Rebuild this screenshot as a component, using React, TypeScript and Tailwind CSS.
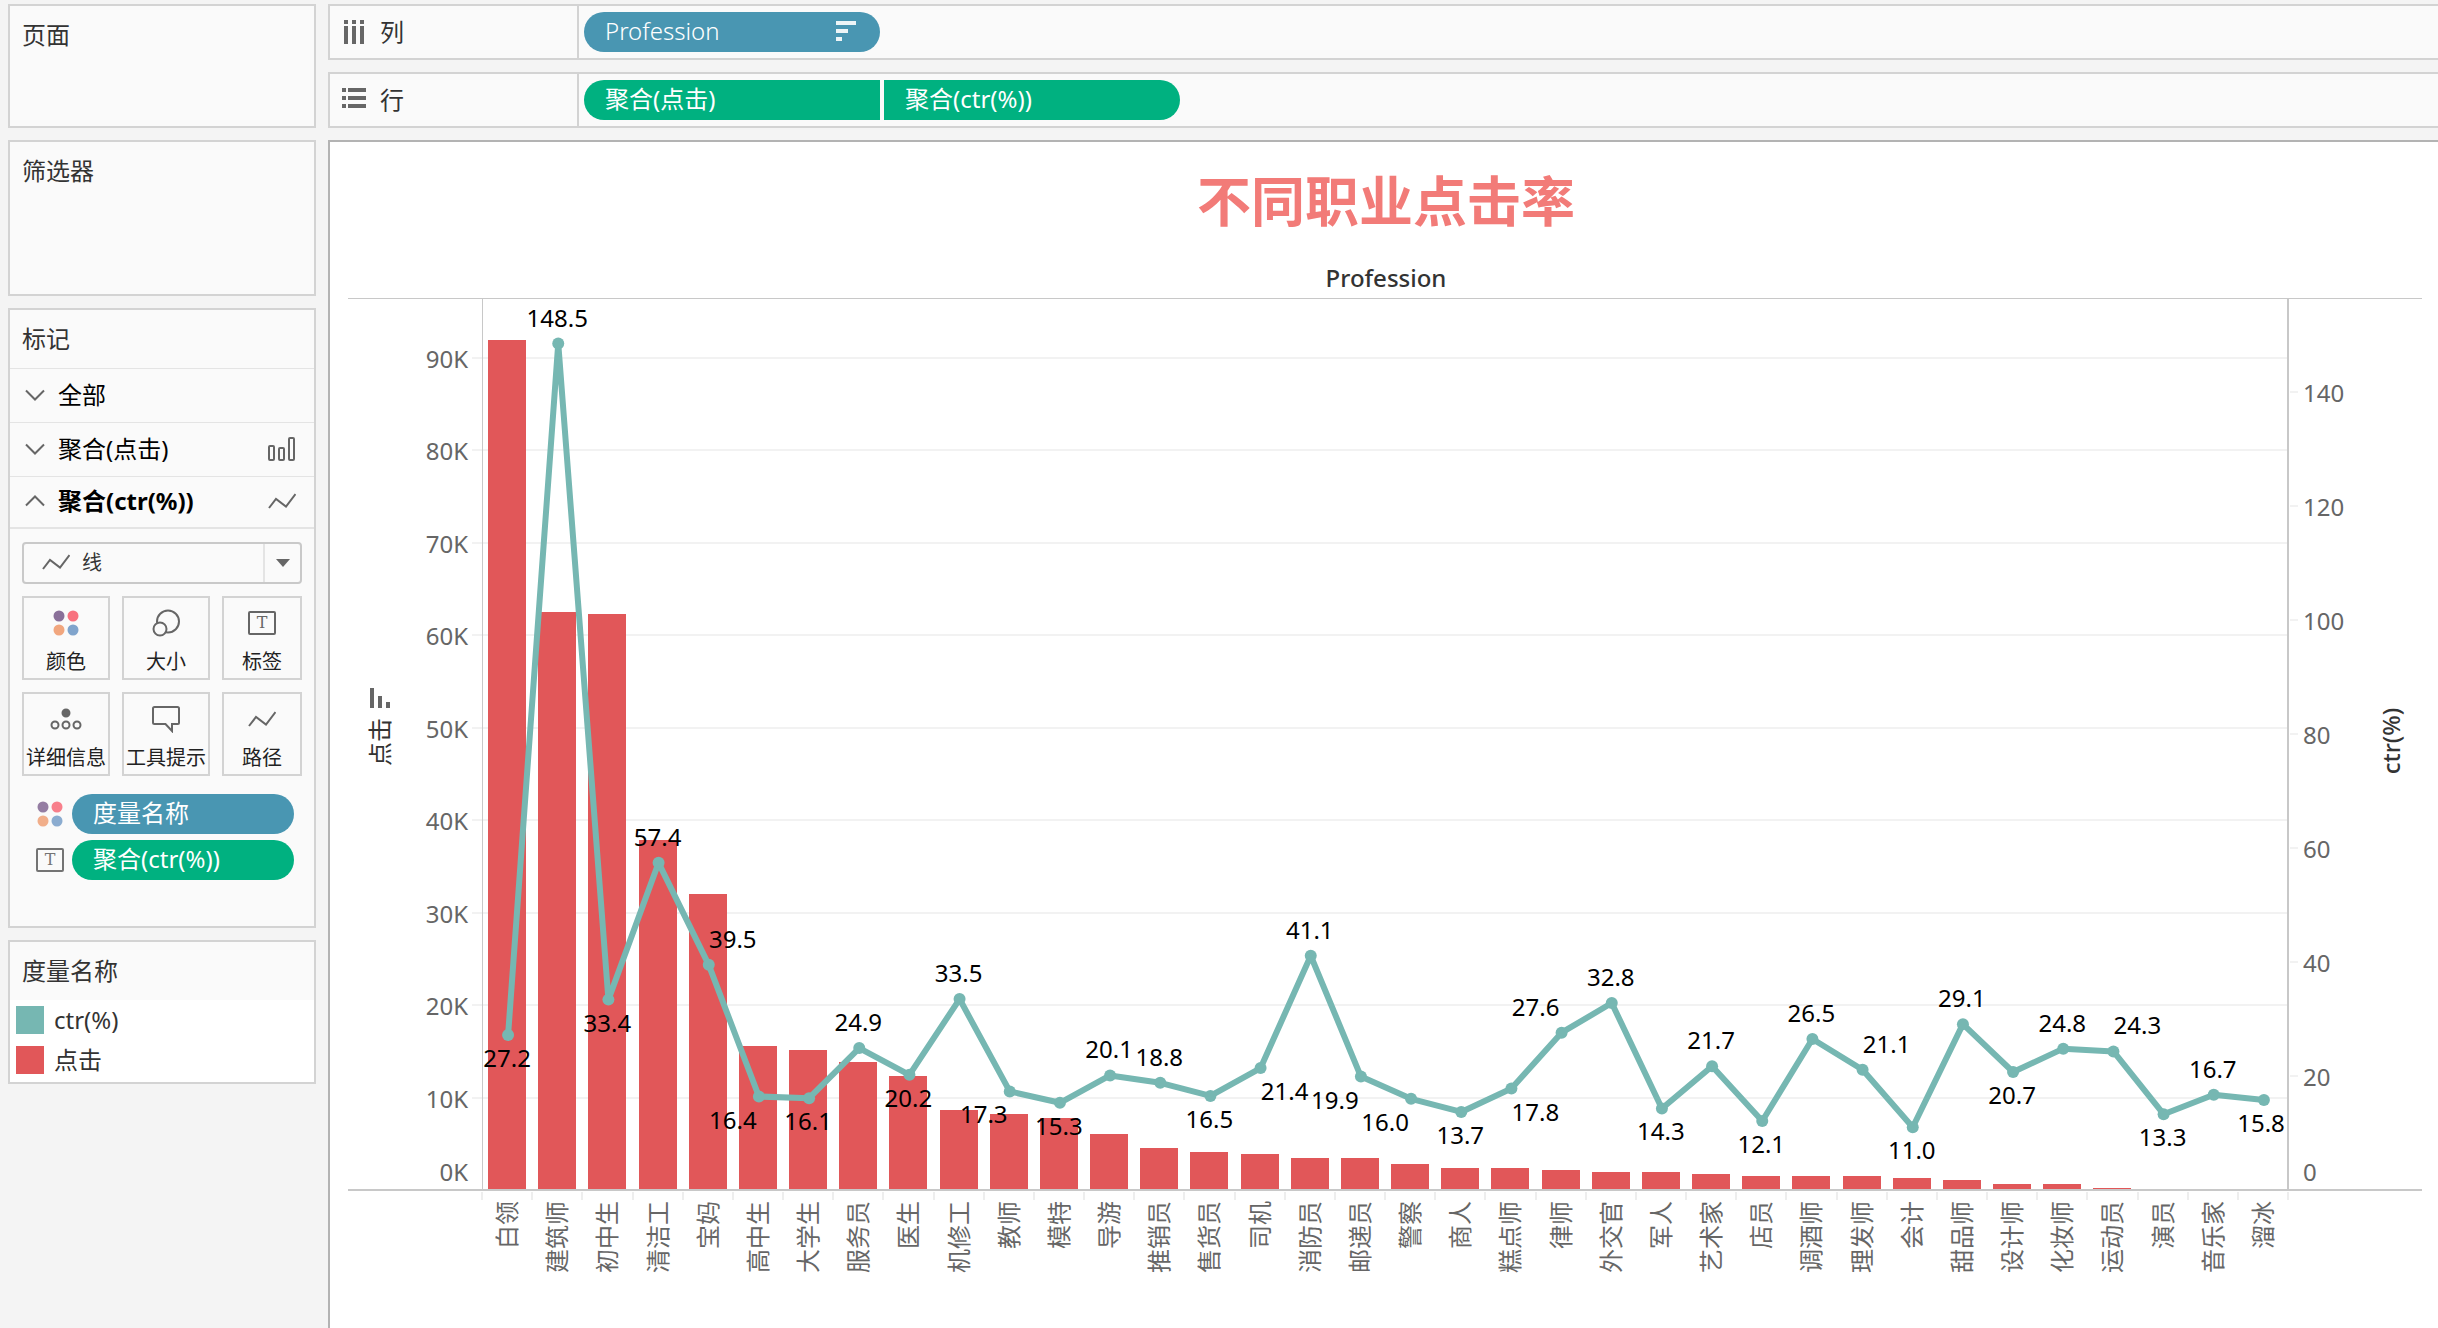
import { useState, type ReactNode } from 'react'

type LabelPlace = 'top' | 'bottom' | 'top-left' | 'top-right' | 'bottom-left' | 'bottom-right'

interface Item {
  name: string
  clicks: number // thousands
  ctr: number
  label: LabelPlace
}

const items: Item[] = [
  { name: '白领', clicks: 91.95, ctr: 27.2, label: 'bottom' },
  { name: '建筑师', clicks: 62.5, ctr: 148.5, label: 'top' },
  { name: '初中生', clicks: 62.3, ctr: 33.4, label: 'bottom' },
  { name: '清洁工', clicks: 37.86, ctr: 57.4, label: 'top' },
  { name: '宝妈', clicks: 32, ctr: 39.5, label: 'top-right' },
  { name: '高中生', clicks: 15.6, ctr: 16.4, label: 'bottom-left' },
  { name: '大学生', clicks: 15.15, ctr: 16.1, label: 'bottom' },
  { name: '服务员', clicks: 13.85, ctr: 24.9, label: 'top' },
  { name: '医生', clicks: 12.3, ctr: 20.2, label: 'bottom' },
  { name: '机修工', clicks: 8.65, ctr: 33.5, label: 'top' },
  { name: '教师', clicks: 8.2, ctr: 17.3, label: 'bottom-left' },
  { name: '模特', clicks: 7.8, ctr: 15.3, label: 'bottom' },
  { name: '导游', clicks: 6.06, ctr: 20.1, label: 'top' },
  { name: '推销员', clicks: 4.54, ctr: 18.8, label: 'top' },
  { name: '售货员', clicks: 4.1, ctr: 16.5, label: 'bottom' },
  { name: '司机', clicks: 3.9, ctr: 21.4, label: 'bottom-right' },
  { name: '消防员', clicks: 3.46, ctr: 41.1, label: 'top' },
  { name: '邮递员', clicks: 3.46, ctr: 19.9, label: 'bottom-left' },
  { name: '警察', clicks: 2.8, ctr: 16.0, label: 'bottom-left' },
  { name: '商人', clicks: 2.38, ctr: 13.7, label: 'bottom' },
  { name: '糕点师', clicks: 2.38, ctr: 17.8, label: 'bottom-right' },
  { name: '律师', clicks: 2.16, ctr: 27.6, label: 'top-left' },
  { name: '外交官', clicks: 1.95, ctr: 32.8, label: 'top' },
  { name: '军人', clicks: 1.95, ctr: 14.3, label: 'bottom' },
  { name: '艺术家', clicks: 1.73, ctr: 21.7, label: 'top' },
  { name: '店员', clicks: 1.5, ctr: 12.1, label: 'bottom' },
  { name: '调酒师', clicks: 1.5, ctr: 26.5, label: 'top' },
  { name: '理发师', clicks: 1.5, ctr: 21.1, label: 'top-right' },
  { name: '会计', clicks: 1.3, ctr: 11.0, label: 'bottom' },
  { name: '甜品师', clicks: 1.08, ctr: 29.1, label: 'top' },
  { name: '设计师', clicks: 0.65, ctr: 20.7, label: 'bottom' },
  { name: '化妆师', clicks: 0.65, ctr: 24.8, label: 'top' },
  { name: '运动员', clicks: 0.2, ctr: 24.3, label: 'top-right' },
  { name: '演员', clicks: 0, ctr: 13.3, label: 'bottom' },
  { name: '音乐家', clicks: 0, ctr: 16.7, label: 'top' },
  { name: '溜冰', clicks: 0, ctr: 15.8, label: 'bottom' },
]

function LineIcon() {
  return (
    <svg viewBox="0 0 28 16" className="h-4 w-7 fill-none stroke-[#666] stroke-2">
      <path d="M1 15 L8 6 L18 13.5 L27.500 1" />
    </svg>
  )
}

function BarsIcon() {
  return (
    <svg viewBox="0 0 28 24" className="h-6 w-7 fill-none stroke-[#666] stroke-2">
      <rect x="1" y="9" width="5" height="14" rx="1" />
      <rect x="11" y="11" width="5" height="12" rx="1" />
      <rect x="21" y="1" width="5" height="22" rx="1" />
    </svg>
  )
}

function Chevron({ up = false }: { up?: boolean }) {
  return (
    <svg viewBox="0 0 20 12" className="h-3 w-5 fill-none stroke-[#666] stroke-2">
      <path d={up ? 'M1 10.500 L10 1.500 L19 10.500' : 'M1 1.500 L10 10.500 L19 1.500'} />
    </svg>
  )
}

function ColorIcon() {
  return (
    <svg viewBox="0 0 26 26" className="size-[26px]">
      <circle cx="6" cy="6" r="5.500" fill="#8a7099" />
      <circle cx="20" cy="6" r="5.500" fill="#f8727f" />
      <circle cx="6" cy="20" r="5.500" fill="#f1a67e" />
      <circle cx="20" cy="20" r="5.500" fill="#80a4cc" />
    </svg>
  )
}

function SizeIcon() {
  return (
    <svg viewBox="0 0 28 28" className="size-7 fill-[#fafafa] stroke-[#666] stroke-2">
      <circle cx="16" cy="12.500" r="11" />
      <circle cx="8" cy="20" r="6.500" />
    </svg>
  )
}

function DetailIcon() {
  return (
    <svg viewBox="0 0 32 22" className="h-[22px] w-8 fill-none stroke-[#666] stroke-2">
      <circle cx="16" cy="5" r="3.500" className="fill-[#666]" />
      <circle cx="5" cy="17" r="3.500" />
      <circle cx="16" cy="17" r="3.500" />
      <circle cx="27" cy="17" r="3.500" />
    </svg>
  )
}

function TooltipIcon() {
  return (
    <svg viewBox="0 0 28 28" className="size-7 fill-none stroke-[#666] stroke-2">
      <path d="M2.500 2 H25.500 Q27 2 27 3.500 V18 Q27 19 26 19 H20 V26 L13.500 19 H2.500 Q1 19 1 17.500 V3.500 Q1 2 2.500 2 Z" />
    </svg>
  )
}

function TextIcon() {
  return (
    <span className="flex h-6 w-7 items-center justify-center rounded-xs border-2 border-[#666] font-['DejaVu_Serif',serif] text-base leading-none text-[#666]">
      T
    </span>
  )
}

function ColumnsIcon() {
  return (
    <svg viewBox="0 0 24 24" className="size-6 fill-[#666]">
      <path d="M2 0h4v4H2zM10 0h4v4h-4zM18 0h4v4h-4zM2 6h4v18H2zM10 6h4v18h-4zM18 6h4v18h-4z" />
    </svg>
  )
}

function RowsIcon() {
  return (
    <svg viewBox="0 0 24 24" className="size-6 fill-[#666]">
      <path d="M0 0h4v4H0zM6 0h18v4H6zM0 8h4v4H0zM6 8h18v4H6zM0 16h4v4H0zM6 16h18v4H6z" />
    </svg>
  )
}

function SortIcon() {
  return (
    <svg viewBox="0 0 20 20" className="size-5 fill-white/90">
      <path d="M0 0h20v4H0zM0 8h12v4H0zM0 16h6v4H0z" />
    </svg>
  )
}

function Panel({ title, className = '', children }: { title: string; className?: string; children?: ReactNode }) {
  return (
    <section className={`border-2 border-[#d3d3d3] bg-[#fafafa] ${className}`}>
      <h2 className="flex h-[58px] items-center px-3">{title}</h2>
      {children}
    </section>
  )
}

function Shelf({ icon, title, children }: { icon: ReactNode; title: string; children: ReactNode }) {
  return (
    <div className="flex h-14 border-2 border-r-0 border-[#d3d3d3] bg-[#fafafa]">
      <div className="flex w-[249px] items-center gap-3.5 border-r-2 border-[#d3d3d3] px-3">
        {icon}
        {title}
      </div>
      <div className="flex items-center gap-1 px-[5px]">{children}</div>
    </div>
  )
}

function Chart() {
  const left = 152
  const right = 1958
  const base = 892
  const step = (right - left) / items.length
  const x = (i: number) => left + step * (i + 0.5) + 1
  const yClicks = (v: number) => base - v * 9.244
  const yCtr = (v: number) => base - v * 5.7

  return (
    <svg viewBox="0 0 2108 1026" className="block w-full text-[24px]" role="img" aria-label="不同职业点击率">
      {/* grid */}
      {[10, 20, 30, 40, 50, 60, 70, 80, 90].map((v) => (
        <rect key={v} x={142} y={Math.round(yClicks(v)) - 1} width={right - 142} height={2} className="fill-[#f2f2f2]" />
      ))}
      {[20, 40, 60, 80, 100, 120, 140].map((v) => (
        <rect key={v} x={1960} y={yCtr(v) - 1} width={8} height={2} className="fill-[#f2f2f2]" />
      ))}
      {Array.from({ length: items.length + 1 }, (_, i) => (
        <rect key={i} x={Math.round(left + step * i) - 1} y={894} width={2} height={8} className="fill-[#eeeeee]" />
      ))}
      <rect x={18} y={0} width={2074} height={1} className="fill-[#c8c8c8]" />
      <rect x={left} y={0} width={1} height={base} className="fill-[#c8c8c8]" />

      {/* bars */}
      {items.map((d, i) => (
        <rect
          key={d.name}
          x={Math.round(x(i) - 20)}
          y={Math.round(yClicks(d.clicks))}
          width={38}
          height={Math.round(d.clicks * 9.244)}
          className="fill-[#e15759]"
        />
      ))}
      <rect x={18} y={base - 1} width={2074} height={2} className="fill-[#c8c8c8]" />
      <rect x={right - 1} y={0} width={2} height={base} className="fill-[#c8c8c8]" />

      {/* line */}
      <polyline
        points={items.map((d, i) => `${x(i)},${yCtr(d.ctr)}`).join(' ')}
        className="fill-none stroke-[#76b7b2] stroke-[6px]"
        strokeLinejoin="round"
      />
      {items.map((d, i) => (
        <circle key={d.name} cx={x(i)} cy={yCtr(d.ctr)} r={6} className="fill-[#76b7b2]" />
      ))}
      {items.map((d, i) => {
        const dx = d.label.endsWith('left') ? -26 : d.label.endsWith('right') ? 24 : -1
        const dy = d.label.startsWith('top') ? -17 : 32
        return (
          <text key={d.name} x={Math.min(x(i) + dx, right - 27)} y={yCtr(d.ctr) + dy} textAnchor="middle" className="fill-black">
            {d.ctr.toFixed(1)}
          </text>
        )
      })}

      {/* axis labels */}
      <g className="fill-[#666]">
        {[0, 10, 20, 30, 40, 50, 60, 70, 80, 90].map((v) => (
          <text key={v} x={138} y={v === 0 ? 883 : Math.round(yClicks(v)) + 10} textAnchor="end">
            {v}K
          </text>
        ))}
        {[0, 20, 40, 60, 80, 100, 120, 140].map((v) => (
          <text key={v} x={1973} y={v === 0 ? 883 : yCtr(v) + 10}>
            {v}
          </text>
        ))}
        {items.map((d, i) => (
          <text key={d.name} transform={`translate(${Math.round(x(i)) + 8} 903) rotate(-90)`} textAnchor="end">
            {d.name}
          </text>
        ))}
        <path d="M40 390h4v20h-4zM48 398h4v12h-4zM56 404h4v6h-4z" />
      </g>
      <text transform="translate(59 444) rotate(-90)" textAnchor="middle" className="fill-[#333]">
        点击
      </text>
      <text transform="translate(2070 443) rotate(-90)" textAnchor="middle" className="fill-[#333] font-medium">
        ctr(%)
      </text>
    </svg>
  )
}

const cards = [
  { name: '颜色', icon: <ColorIcon /> },
  { name: '大小', icon: <SizeIcon /> },
  { name: '标签', icon: <TextIcon /> },
  { name: '详细信息', icon: <DetailIcon /> },
  { name: '工具提示', icon: <TooltipIcon /> },
  { name: '路径', icon: <LineIcon /> },
]

const pill = 'flex h-10 items-center pb-0.5 text-left text-white'
const layerRow = 'flex w-full items-center gap-[13px] border-t border-[#e4e4e4] pr-[18px] pb-0.5 pl-[15px]'

export default function App() {
  const [mark, setMark] = useState('线')

  return (
    <div
      lang="zh-CN"
      className="flex min-h-screen gap-3 bg-[#f4f4f4] pt-1 pl-2 font-['Noto_Sans','Noto_Sans_CJK_SC',sans-serif] text-[24px] leading-8 text-[#333]"
    >
      <aside className="flex w-[308px] shrink-0 flex-col gap-3">
        <Panel title="页面" className="h-[124px]" />
        <Panel title="筛选器" className="h-[156px]" />

        <Panel title="标记" className="h-[620px]">
          <div className="text-black">
            <button className={`${layerRow} h-[54px]`}>
              <Chevron />
              全部
            </button>
            <button className={`${layerRow} h-[54px]`}>
              <Chevron />
              <span className="grow text-left">聚合(点击)</span>
              <BarsIcon />
            </button>
            <button className={`${layerRow} h-[53px] border-b-2 font-bold`}>
              <Chevron up />
              <span className="grow text-left">聚合(ctr(%))</span>
              <LineIcon />
            </button>
          </div>

          <div className="relative mx-3 mt-[13px] h-[42px]">
            <select
              aria-label="标记类型"
              value={mark}
              onChange={(e) => setMark(e.target.value)}
              className="h-full w-full appearance-none rounded-sm border-2 border-[#c9c9c9] bg-[#fafafa] pl-[58px] text-[20px]"
            >
              <option>线</option>
              <option>条形图</option>
            </select>
            <span className="pointer-events-none absolute top-3 left-5">
              <LineIcon />
            </span>
            <span className="pointer-events-none absolute inset-y-0.5 right-0.5 flex w-[37px] items-center justify-center border-l-2 border-[#e4e4e4]">
              <svg viewBox="0 0 14 8" className="h-2 w-3.5 fill-[#666]">
                <path d="M0 0h14L7 8z" />
              </svg>
            </span>
          </div>

          <div className="mx-3 mt-3 grid grid-cols-[11fr_11fr_10fr] gap-3">
            {cards.map((c) => (
              <button
                key={c.name}
                className="flex h-[84px] flex-col items-center justify-between border-2 border-[#d3d3d3] pt-[7px] pb-0.5 text-[20px] leading-7 whitespace-nowrap text-[#222]"
              >
                <span className="flex h-9 items-center">{c.icon}</span>
                {c.name}
              </button>
            ))}
          </div>

          <ul className="mt-[18px] space-y-1.5 pr-5 pl-[26px]">
            <li className="flex items-center gap-2">
              <span className="flex w-7 justify-center opacity-90">
                <ColorIcon />
              </span>
              <button className={`${pill} grow rounded-full bg-[#4996b2] px-[21px]`}>度量名称</button>
            </li>
            <li className="flex items-center gap-2">
              <span className="opacity-90">
                <TextIcon />
              </span>
              <button className={`${pill} grow rounded-full bg-[#00b180] px-[21px]`}>聚合(ctr(%))</button>
            </li>
          </ul>
        </Panel>

        <Panel title="度量名称">
          <ul className="space-y-3 bg-white p-1.5 pb-2">
            <li className="flex h-7 items-center gap-2.5">
              <span className="size-7 bg-[#76b7b2]" />
              ctr(%)
            </li>
            <li className="flex h-7 items-center gap-2.5">
              <span className="size-7 bg-[#e15759]" />
              点击
            </li>
          </ul>
        </Panel>
      </aside>

      <main className="flex min-w-0 grow flex-col gap-3">
        <Shelf icon={<ColumnsIcon />} title="列">
          <button className={`${pill} w-[296px] justify-between rounded-full bg-[#4996b2] pr-6 pl-[21px] font-light`}>
            Profession
            <SortIcon />
          </button>
        </Shelf>
        <Shelf icon={<RowsIcon />} title="行">
          <button className={`${pill} w-[296px] rounded-l-full bg-[#00b180] px-[21px]`}>聚合(点击)</button>
          <button className={`${pill} w-[296px] rounded-r-full bg-[#00b180] px-[21px]`}>聚合(ctr(%))</button>
        </Shelf>

        <section className="grow border-t-2 border-l-2 border-[#b3b3b3] bg-white">
          <h1 className="pt-[19px] pl-1 text-center text-[54px] leading-[80px] font-bold text-[#f27b78]">不同职业点击率</h1>
          <p className="mt-[21px] pb-1 pl-1 text-center font-medium">Profession</p>
          <Chart />
        </section>
      </main>
    </div>
  )
}
